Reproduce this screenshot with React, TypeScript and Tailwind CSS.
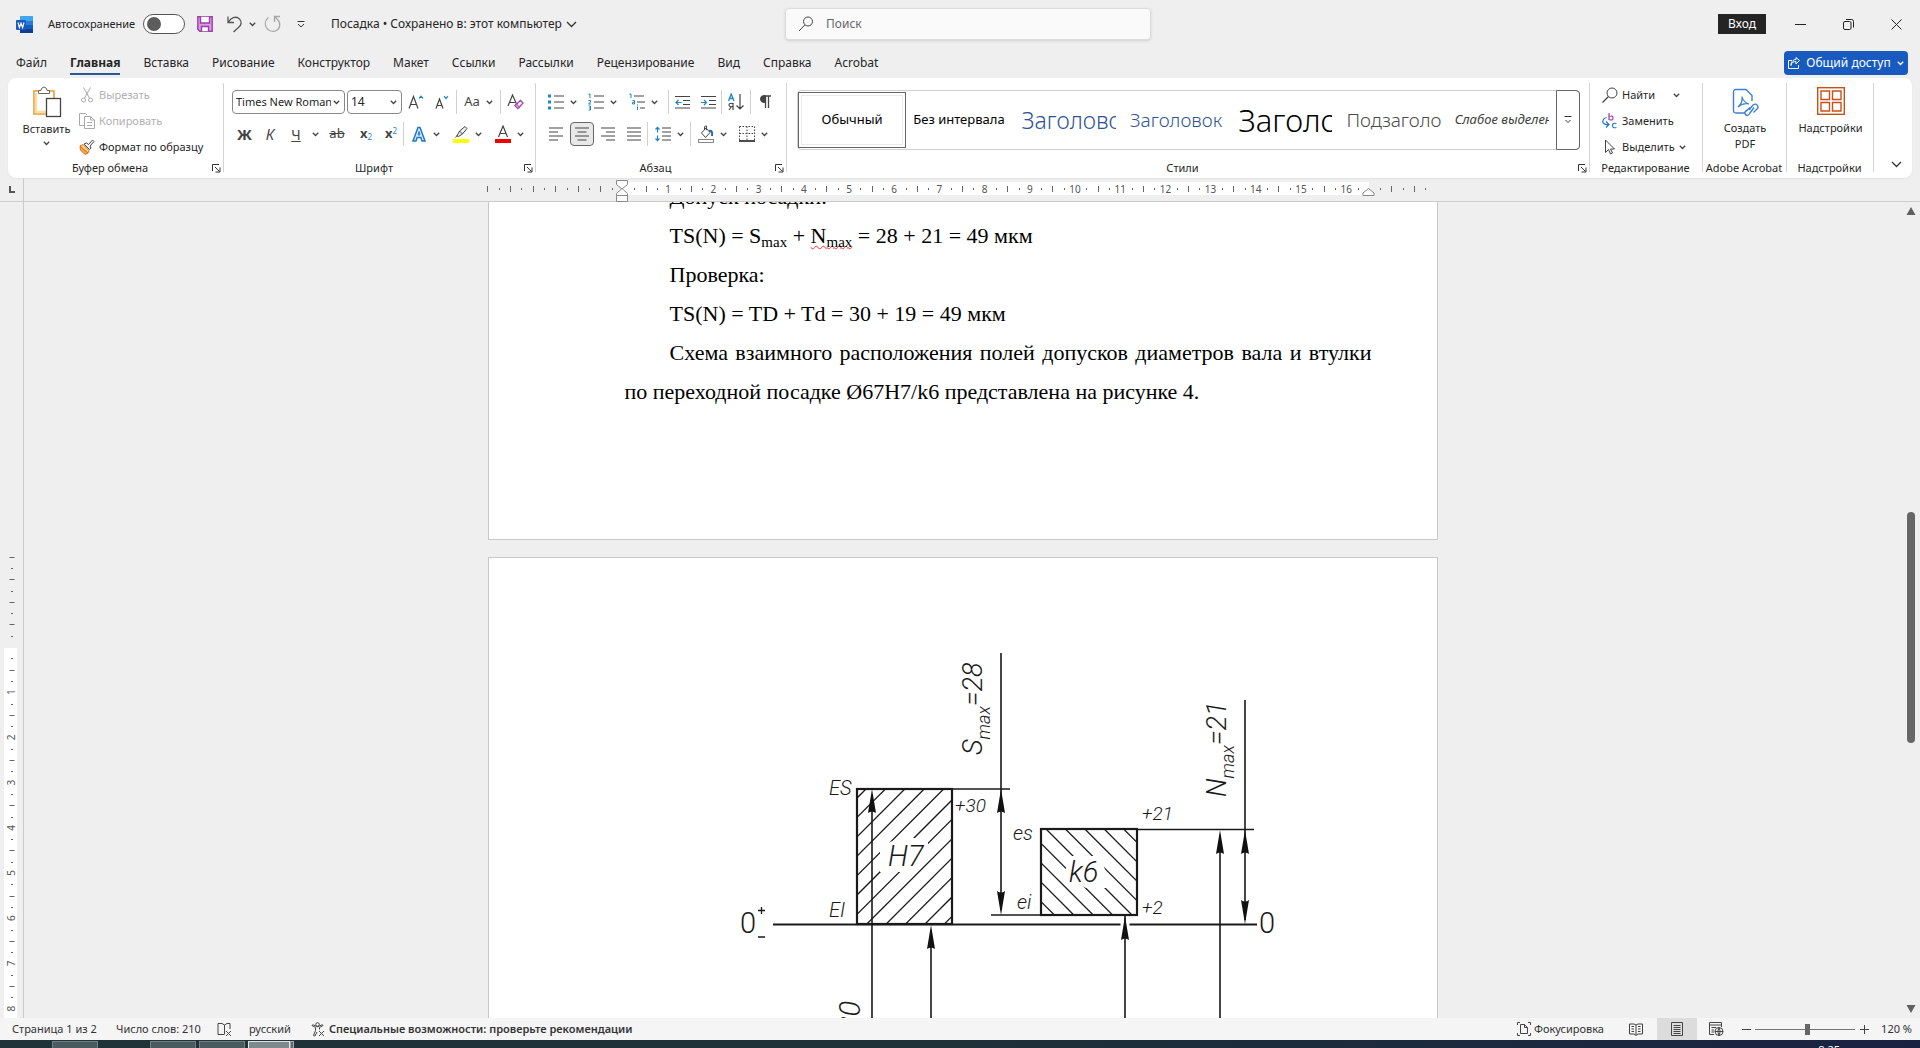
import type { ReactNode } from 'react';
import clsx from 'clsx';

const TABS = [
  'Файл',
  'Главная',
  'Вставка',
  'Рисование',
  'Конструктор',
  'Макет',
  'Ссылки',
  'Рассылки',
  'Рецензирование',
  'Вид',
  'Справка',
  'Acrobat',
];

const STYLES = [
  { name: 'Обычный', className: 'text-[13px] text-black justify-center' },
  { name: 'Без интервала', className: 'text-[13px] text-black' },
  { name: 'Заголовок 1', className: 'text-[23px] font-light text-[#2f5496]' },
  { name: 'Заголовок 2', className: 'text-[19px] font-light text-[#2f5496]' },
  { name: 'Заголовок', className: 'text-[31px] font-light text-black' },
  { name: 'Подзаголовок', className: 'text-[19px] font-light text-[#4a4a4a]' },
  { name: 'Слабое выделение', className: 'text-[13px] italic text-[#404040]' },
];

/* ---------- small building blocks ---------- */

function Svg({ w = 16, h = 16, children }: { w?: number; h?: number; children: ReactNode }) {
  return (
    <svg width={w} height={h} viewBox={`0 0 ${w} ${h}`} fill="none" stroke="#444" className="shrink-0">
      {children}
    </svg>
  );
}

function Chevron({ color = '#444' }: { color?: string }) {
  return (
    <svg width="7" height="5" viewBox="0 0 7 5" fill="none" className="shrink-0">
      <path d="M0.8 0.8L3.5 3.5L6.2 0.8" stroke={color} strokeWidth="1.3" />
    </svg>
  );
}

function BigChevron() {
  return (
    <svg width="11" height="7" viewBox="0 0 11 7" fill="none" stroke="#333" className="shrink-0">
      <path d="M1 1L5.5 5.5L10 1" strokeWidth="1.3" />
    </svg>
  );
}

function Tool({ label, w, children }: { label: string; w: string; children: ReactNode }) {
  return (
    <button aria-label={label} className={clsx('flex h-6 shrink-0 items-center justify-center', w)}>
      {children}
    </button>
  );
}

function SplitTool({ label, w, children }: { label: string; w: string; children: ReactNode }) {
  return (
    <button aria-label={label} className={clsx('flex h-6 shrink-0 items-center justify-center gap-1.5', w)}>
      {children}
      <Chevron />
    </button>
  );
}

function Sep() {
  return <span className="h-6 w-px shrink-0 bg-[#d0d0d0]" />;
}

function Group({
  title,
  launcher,
  className,
  children,
}: {
  title: string;
  launcher?: boolean;
  className: string;
  children: ReactNode;
}) {
  return (
    <section className={clsx('relative flex flex-col', className)}>
      <div className="min-h-0 flex-1">{children}</div>
      <div className="flex h-5 items-center pr-0.5">
        <h2 className="flex-1 whitespace-nowrap text-center text-[11px]">{title}</h2>
        {launcher && (
          <button aria-label={`${title}: параметры`} className="w-2.5">
            <svg width="9" height="9" viewBox="0 0 9 9" fill="none" stroke="#333">
              <path d="M0.5 7V0.5H7M3 3L7.5 7.5M8 3.5V8H3.5" />
            </svg>
          </button>
        )}
      </div>
      <span className="absolute right-0 top-[5px] h-[89px] w-px bg-[#d4d4d4]" />
    </section>
  );
}

/* ---------- title bar and tabs ---------- */

function TitleBar() {
  return (
    <header className="flex h-12 shrink-0 items-center text-[11px]">
      <div className="flex min-w-0 flex-1 items-center pl-4">
        <svg width="17" height="17" viewBox="0 0 17 17" className="shrink-0">
          <rect x="4" y="0" width="13" height="17" rx="1.5" fill="#2b7cd3" />
          <rect x="4" y="0" width="13" height="5" rx="1" fill="#41a5ee" />
          <rect x="4" y="9" width="13" height="8" fill="#185abd" />
          <rect x="4" y="13" width="13" height="4" rx="1" fill="#103f91" />
          <rect x="0" y="4" width="10" height="10" rx="1" fill="#185abd" />
          <path d="M2 6.5L3.4 11.5L5 7.2L6.6 11.5L8 6.5" stroke="#fff" strokeWidth="1.2" fill="none" />
        </svg>
        <label htmlFor="autosave" className="ml-[15px] w-[95px] whitespace-nowrap">
          Автосохранение
        </label>
        <span className="relative h-5 w-[42px] shrink-0 rounded-full border border-[#555] bg-white">
          <input id="autosave" type="checkbox" className="absolute inset-0 m-0 h-full w-full appearance-none" />
          <span className="pointer-events-none absolute left-[3px] top-0.5 h-3.5 w-3.5 rounded-full bg-[#5c5c5c]" />
        </span>
        <button aria-label="Сохранить" className="ml-3">
          <svg width="16" height="16" viewBox="0 0 16 16" fill="none" stroke="#9b3fa8" strokeWidth="1.4">
            <path d="M0.8 0.8H15.2V15.2H2.8L0.8 13.2Z" fill="#d99be2" />
            <path d="M3.5 0.8V7H12.5V0.8" fill="#fff" />
            <path d="M4.5 15.2V10.5H11.5V15.2" fill="#fff" />
          </svg>
        </button>
        <button aria-label="Отменить" className="ml-3.5 flex items-center gap-1.5">
          <svg width="16" height="18" viewBox="0 0 16 18" fill="none" stroke="#555" strokeWidth="1.3">
            <path d="M1 1.5V7.5H7M1.5 7C4 2.5 8.500 1 12 3.500C15.500 6.500 14.500 10 11.500 12.500L6.500 17" />
          </svg>
          <Chevron />
        </button>
        <button aria-label="Повторить" className="ml-2">
          <svg width="17" height="18" viewBox="0 0 17 18" fill="none" stroke="#a8a8a8" strokeWidth="1.3">
            <path d="M4.500 2.500C1.500 4.500 0.500 8.500 2 12C4 16 9 17.500 12.500 15.500C16.500 13 17 7.500 13 4L10.500 1.500M16 1.500H10.500V7" />
          </svg>
        </button>
        <button aria-label="Настройка панели быстрого доступа" className="ml-4">
          <svg width="8" height="7" viewBox="0 0 8 7" fill="none" stroke="#333">
            <path d="M0.500 0.500H7.500M1 3L4 6L7 3" />
          </svg>
        </button>
        <button className="ml-[26px] flex items-center gap-1 whitespace-nowrap text-[12px]">
          Посадка • Сохранено в: этот компьютер
          <BigChevron />
        </button>
      </div>

      <div className="flex h-8 w-[366px] shrink-0 items-center gap-3 rounded-sm border border-[#dcdcdc] bg-[#fafafa] px-3 shadow-sm">
        <Svg w={16} h={16}>
          <circle cx="10" cy="5.500" r="4.500" />
          <path d="M6.800 9L1 15" />
        </Svg>
        <input
          aria-label="Поиск"
          placeholder="Поиск"
          className="w-full bg-transparent text-[12px] outline-none placeholder:text-[#666]"
        />
      </div>

      <div className="flex flex-1 items-center justify-end">
        <button className="mr-2.5 h-5 w-12 bg-[#242424] text-[12px] text-white">Вход</button>
        <Tool label="Свернуть" w="w-12">
          <Svg w={11} h={11}>
            <path d="M0 5.500H11" stroke="#222" />
          </Svg>
        </Tool>
        <Tool label="Восстановить" w="w-12">
          <Svg w={11} h={11}>
            <rect x="0.500" y="2.500" width="7.500" height="8" rx="1.500" stroke="#222" />
            <path d="M3 0.500H8.500Q10.500 0.500 10.500 2.500V8.500" stroke="#222" />
          </Svg>
        </Tool>
        <Tool label="Закрыть" w="w-12">
          <Svg w={11} h={11}>
            <path d="M0.500 0.500L10.500 10.500M10.500 0.500L0.500 10.500" stroke="#222" />
          </Svg>
        </Tool>
      </div>
    </header>
  );
}

function Tabs() {
  return (
    <nav className="flex h-[30px] shrink-0 items-center pl-[5px] pr-3">
      {TABS.map((tab) => (
        <button key={tab} className="h-full pl-[11px] pr-3 text-[12px]">
          <span
            className={clsx(
              'block h-6 whitespace-nowrap leading-6',
              tab === 'Главная' && 'border-b-2 border-[#2b579a] font-bold',
            )}
          >
            {tab}
          </span>
        </button>
      ))}
      <button className="ml-auto flex h-6 w-[124px] items-center justify-center gap-1.5 whitespace-nowrap rounded bg-[#185abd] text-[12px] text-white">
        <svg width="12" height="12" viewBox="0 0 12 12" fill="none" stroke="#fff" className="shrink-0">
          <path d="M4 3.500H0.500V11.500H10.500V8M3 8.500C3.500 5.500 5.500 4.500 8 4.500V7L11.500 3.500L8 0.500V2.500C5 2.500 3 5 3 8.500Z" />
        </svg>
        Общий доступ
        <Chevron color="#fff" />
      </button>
    </nav>
  );
}

/* ---------- ribbon groups ---------- */

function ClipboardGroup() {
  return (
    <Group title="Буфер обмена" launcher className="w-[216px]">
      <div className="flex">
        <button className="flex w-[71px] flex-col items-center pl-1.5 pt-2 text-[11px] leading-4">
          <svg width="30" height="32" viewBox="0 0 30 32" fill="none">
            <path d="M2 5H22V28H2Z" fill="#fff" stroke="#e59b2c" strokeWidth="1.500" />
            <path d="M4 7V26H14" stroke="#fbdca5" strokeWidth="2.500" />
            <path d="M6.500 7.500V4.500H9C9.500 0 14.500 0 15 4.500H17.500V7.500Z" fill="#fff" stroke="#666" />
            <rect x="14.500" y="12.500" width="14" height="18" fill="#fff" stroke="#444" strokeWidth="1.300" />
          </svg>
          <span className="mt-[3px]">Вставить</span>
          <span className="mt-1">
            <Chevron />
          </span>
        </button>
        <div className="flex flex-col pt-1 text-[11px]">
          <button disabled className="flex h-[26px] items-center gap-1 text-[#b1b1b1]">
            <Svg w={16} h={16}>
              <g stroke="#aaa">
                <path d="M4.500 0.500L10.500 11M11.500 0.500L5.500 11" />
                <circle cx="4.500" cy="13" r="2" />
                <circle cx="11.500" cy="13" r="2" />
              </g>
            </Svg>
            Вырезать
          </button>
          <button disabled className="flex h-[26px] items-center gap-1 text-[#b1b1b1]">
            <Svg w={16} h={16}>
              <g stroke="#aaa">
                <path d="M5 12.500H0.500V0.500H6.500L8 2" />
                <path d="M5.500 3.500H11.500L15.500 7V15.500H5.500ZM11.500 3.500V7H15.500M8 9.500H13M8 12.500H13" />
              </g>
            </Svg>
            Копировать
          </button>
          <button className="flex h-[26px] items-center gap-1 whitespace-nowrap">
            <Svg w={16} h={16}>
              <path d="M1 7L9 14L6 15.500L1.500 11Z" fill="#f7a64a" stroke="#d9730d" />
              <path d="M1 7L4 5.500L10 11.500L9 14Z" fill="#fbd09b" stroke="#d9730d" />
              <path d="M5 5L7.500 4L9.500 5.500L13.500 1L15 2.500L11 7L12 9L10.500 10.500Z" fill="#fff" />
            </Svg>
            Формат по образцу
          </button>
        </div>
      </div>
    </Group>
  );
}

function FontGroup() {
  return (
    <Group title="Шрифт" launcher className="w-[312px]">
      <div className="flex h-9 items-end pl-2">
        <div className="mr-0.5 flex h-6 w-[113px] items-center rounded border border-[#888] pl-[3px] pr-1">
          <input
            aria-label="Шрифт"
            defaultValue="Times New Roman"
            className="mr-0.5 w-full min-w-0 bg-transparent text-[11px] outline-none"
          />
          <Chevron />
        </div>
        <div className="flex h-6 w-[55px] items-center rounded border border-[#888] pl-[3px] pr-1">
          <input
            aria-label="Размер шрифта"
            defaultValue="14"
            className="w-full min-w-0 bg-transparent text-[12px] outline-none"
          />
          <Chevron />
        </div>
        <Tool label="Увеличить размер" w="w-7">
          <Svg>
            <path d="M1 14.500L5.500 2.500L10 14.500M2.700 10.500H8.300" strokeWidth="1.200" />
            <path d="M11 4.500L13 2.200L15 4.500" stroke="#1e86c8" strokeWidth="1.200" />
          </Svg>
        </Tool>
        <Tool label="Уменьшить размер" w="w-6">
          <Svg w={14} h={16}>
            <path d="M1 14.500L4.500 5L8 14.500M2.300 11.500H6.700" strokeWidth="1.200" />
            <path d="M9 2.200L11 4.500L13 2.200" stroke="#1e86c8" strokeWidth="1.200" />
          </Svg>
        </Tool>
        <span className="w-0.5" />
        <Sep />
        <button className="flex h-6 w-[43px] items-center justify-center gap-1.5 text-[13px] text-[#444]">
          Aa
          <Chevron />
        </button>
        <Sep />
        <Tool label="Очистить форматирование" w="w-7">
          <Svg w={17} h={18}>
            <path d="M1 13L5.500 2L9.500 11M2.700 9.500H8" strokeWidth="1.200" />
            <path d="M8 12.500L13.500 7.500L16 10L11 15.500Z" fill="#fff" stroke="#a33fb0" strokeWidth="1.300" />
            <path d="M8 12.500L11 15.500L12.500 14L9.500 11Z" fill="#d99be2" stroke="#a33fb0" />
          </Svg>
        </Tool>
      </div>
      <div className="flex h-8 items-end pl-2 text-[#444]">
        <button className="h-6 w-[25px] text-[15px] font-bold">Ж</button>
        <button className="h-6 w-[26px] text-[15px] italic">К</button>
        <button className="h-6 w-[26px] text-[14px] underline">Ч</button>
        <Tool label="Вид подчёркивания" w="w-3">
          <Chevron />
        </Tool>
        <button className="h-6 w-8 text-[13px] line-through">ab</button>
        <button className="h-6 w-[26px] text-[13px] font-bold">
          x<sub className="text-[8px] font-normal text-[#1e86c8]">2</sub>
        </button>
        <button className="h-6 w-6 text-[13px] font-bold">
          x<sup className="text-[8px] font-normal text-[#1e86c8]">2</sup>
        </button>
        <Sep />
        <SplitTool label="Текстовые эффекты" w="w-[42px]">
          <Svg>
            <path d="M2 15L7 1.500H9L14 15H11L9.800 11.500H6.200L5 15Z" fill="#d6ecfb" stroke="#1e78c8" strokeWidth="1.500" />
            <path d="M7 9H9L8 5.500Z" fill="#fff" stroke="#1e78c8" />
          </Svg>
        </SplitTool>
        <SplitTool label="Цвет выделения" w="w-[42px]">
          <Svg w={16} h={18}>
            <path d="M4 11L6.500 6L12 1.500L14 3.500L9.500 9L5.500 11.500ZM6.500 6L9.500 9M2.500 12.500L4.500 10" fill="#eee" />
            <rect x="0" y="14" width="16" height="4" fill="#ffff00" stroke="none" />
          </Svg>
        </SplitTool>
        <SplitTool label="Цвет шрифта" w="w-[42px]">
          <Svg w={16} h={18}>
            <path d="M3.500 12L8 1L12.500 12M5 8.500H11" strokeWidth="1.200" />
            <rect x="0" y="14" width="16" height="4" fill="#ee0000" stroke="none" />
          </Svg>
        </SplitTool>
      </div>
    </Group>
  );
}

function ParagraphGroup() {
  return (
    <Group title="Абзац" launcher className="w-[251px]">
      <div className="flex h-9 items-end pl-1.5">
        <SplitTool label="Маркеры" w="w-10">
          <Svg w={16} h={18}>
            <path d="M6 3H16M6 9H16M6 15H16" strokeWidth="1.200" />
            <path d="M0 1.500H3V4.500H0ZM0 7.500H3V10.500H0ZM0 13.500H3V16.500H0Z" fill="#1e86c8" stroke="none" />
          </Svg>
        </SplitTool>
        <SplitTool label="Нумерация" w="w-10">
          <Svg w={16} h={18}>
            <path d="M6 3H16M6 9H16M6 15H16" strokeWidth="1.200" />
            <path d="M0.500 1.500L2 0.800V5M0.500 7.500H2.500V9L0.500 11H3M0.500 13H2.500V17H0.500M1 15H2.500" stroke="#1e86c8" />
          </Svg>
        </SplitTool>
        <SplitTool label="Многоуровневый список" w="w-[42px]">
          <Svg w={16} h={18}>
            <path d="M5 3H15M8 9H16M11 15H16" strokeWidth="1.200" />
            <path d="M0.500 1.500L2 0.800V5M3.500 7.500H5.500V11H3.500V9.300H5.500M8.500 13.500V17M8.500 11.500V12.500" stroke="#1e86c8" />
          </Svg>
        </SplitTool>
        <span className="w-1" />
        <Sep />
        <Tool label="Уменьшить отступ" w="w-[26px]">
          <Svg w={15} h={14}>
            <path d="M0 1.500H15M8 5.500H15M8 9.500H15M0 13H15" />
            <path d="M6.500 7.500H1M3.500 5L1 7.500L3.500 10" stroke="#1e86c8" strokeWidth="1.200" />
          </Svg>
        </Tool>
        <Tool label="Увеличить отступ" w="w-[26px]">
          <Svg w={15} h={14}>
            <path d="M0 1.500H15M8 5.500H15M8 9.500H15M0 13H15" />
            <path d="M0 7.500H5.500M3 5L5.500 7.500L3 10" stroke="#1e86c8" strokeWidth="1.200" />
          </Svg>
        </Tool>
        <Sep />
        <Tool label="Сортировка" w="w-7">
          <Svg w={16} h={18}>
            <path d="M0.500 8L3.200 1L6 8M1.500 5.500H5" stroke="#1e86c8" strokeWidth="1.300" />
            <path d="M5 10V17M5 10.500H2.500Q1 10.500 1 12T2.500 13.500H5M3.500 13.500L1 17M12 1V16M8.500 12.500L12 16L15.500 12.500" strokeWidth="1.200" />
          </Svg>
        </Tool>
        <Sep />
        <Tool label="Все знаки" w="w-7">
          <Svg w={11} h={14}>
            <path d="M5.500 1H11M5.500 1V13M8.500 1V13" strokeWidth="1.300" />
            <path d="M5.500 0.500H4Q0.500 0.500 0.500 4T4 7.500H5.500Z" fill="#444" />
          </Svg>
        </Tool>
      </div>
      <div className="flex h-8 items-end pl-[7px]">
        <Tool label="По левому краю" w="w-[26px]">
          <Svg w={14} h={14}>
            <path d="M0 1H14M0 5H9M0 9H14M0 13H9" strokeWidth="1.200" />
          </Svg>
        </Tool>
        <span className="flex h-6 w-[26px] justify-center">
          <button aria-label="По центру" className="flex h-6 w-6 items-center justify-center rounded border border-[#666] bg-[#e8e8e8]">
            <Svg w={14} h={14}>
              <path d="M0 1H14M2.500 5H11.500M0 9H14M2.500 13H11.500" strokeWidth="1.200" />
            </Svg>
          </button>
        </span>
        <Tool label="По правому краю" w="w-[26px]">
          <Svg w={14} h={14}>
            <path d="M0 1H14M5 5H14M0 9H14M5 13H14" strokeWidth="1.200" />
          </Svg>
        </Tool>
        <Tool label="По ширине" w="w-[26px]">
          <Svg w={14} h={14}>
            <path d="M0 1H14M0 5H14M0 9H14M0 13H14" strokeWidth="1.200" />
          </Svg>
        </Tool>
        <Sep />
        <SplitTool label="Интервал" w="w-[42px]">
          <Svg w={16} h={16}>
            <path d="M7 2H16M7 6H16M7 10H16M7 14H16" strokeWidth="1.200" />
            <path d="M2.500 1.500V6.500M0.500 3.500L2.500 1.300L4.500 3.500M2.500 9.500V14.500M0.500 12.500L2.500 14.700L4.500 12.500" stroke="#1e86c8" strokeWidth="1.200" />
          </Svg>
        </SplitTool>
        <Sep />
        <SplitTool label="Заливка" w="w-[42px]">
          <Svg w={16} h={18}>
            <path d="M8 3L3.500 8L7.500 12.500L12 7.500ZM6.500 5V2Q7 0.500 8.500 1V5" />
            <path d="M11 6Q15 5 14 11" stroke="#1e68b8" strokeWidth="2" />
            <rect x="0.500" y="14.500" width="15" height="3" stroke="#888" />
          </Svg>
        </SplitTool>
        <SplitTool label="Границы" w="w-10">
          <Svg w={16} h={16}>
            <path d="M0.500 0.500H15.500M0.500 7.500H15.500M0.500 0.500V14M8 0.500V14M15.500 0.500V14" strokeDasharray="1.500 1.500" />
            <path d="M0 15H16" stroke="#111" strokeWidth="1.500" />
          </Svg>
        </SplitTool>
      </div>
    </Group>
  );
}

function StylesGroup() {
  return (
    <Group title="Стили" launcher className="min-w-0 flex-1">
      <div className="flex h-[72px] items-end pl-2.5 pr-2.5">
        <div className="flex h-[60px] min-w-0 flex-1 items-stretch rounded border border-[#d0d0d0]">
          <div className="grid min-w-0 flex-1 grid-cols-7">
            {STYLES.map((style, i) => (
              <button
                key={style.name}
                className={clsx(
                  'flex min-w-0 items-center',
                  i === 0 ? 'my-px border border-[#666] p-0.5' : 'px-[7px]',
                )}
              >
                <span
                  className={clsx(
                    'flex h-full w-full items-center overflow-hidden whitespace-nowrap',
                    i === 0 && 'border border-[#eaeaea]',
                    style.className,
                  )}
                >
                  {style.name}
                </span>
              </button>
            ))}
          </div>
          <button
            aria-label="Другие стили"
            className="-my-px -mr-px flex w-6 shrink-0 items-center justify-center rounded-r border border-[#666]"
          >
            <svg width="8" height="8" viewBox="0 0 8 8" fill="none" stroke="#333">
              <path d="M0.500 0.500H7.500M1.500 4L4 6.500L6.500 4" />
            </svg>
          </button>
        </div>
      </div>
    </Group>
  );
}

function EditingGroup() {
  return (
    <Group title="Редактирование" className="w-[113px]">
      <div className="flex flex-col pl-3 pt-1 text-[11px]">
        <button className="flex h-[26px] items-center gap-1">
          <Svg>
            <circle cx="10" cy="6" r="5" />
            <path d="M6.500 9.500L0.500 15.500" strokeWidth="1.200" />
          </Svg>
          <span className="w-[47px] text-left">Найти</span>
          <Chevron />
        </button>
        <button className="flex h-[26px] items-center gap-1">
          <Svg>
            <path d="M7 0V7M7 3.500Q11 2 11 5T7 6.500" stroke="#a33fb0" strokeWidth="1.200" />
            <path d="M14.500 10.500Q10.500 9.500 10.500 12.500T14.500 14.500M4.500 4.500Q0 6 1 9.500Q2 12 6.500 11.500M4 8.500L7 11.500L4 14.500" stroke="#1e78c8" strokeWidth="1.200" />
          </Svg>
          Заменить
        </button>
        <button className="flex h-[26px] items-center gap-1 whitespace-nowrap">
          <Svg>
            <path d="M3.500 1V13.500L6.500 10.500L8.500 15L10.500 14L8.500 10H12.500Z" />
          </Svg>
          Выделить
          <Chevron />
        </button>
      </div>
    </Group>
  );
}

function Ribbon() {
  return (
    <div className="mx-2 flex h-[100px] shrink-0 rounded-lg bg-white shadow-xs">
      <ClipboardGroup />
      <FontGroup />
      <ParagraphGroup />
      <StylesGroup />
      <EditingGroup />
      <Group title="Adobe Acrobat" className="w-[84px]">
        <button className="flex w-full flex-col items-center pt-2.5 text-[11px] leading-4">
          <svg width="27" height="30" viewBox="0 0 27 30" fill="none" stroke="#3c7fd6" strokeWidth="1.400">
            <path d="M13 25H4Q1.500 25 1.500 22.500V4Q1.500 1.500 4 1.500H14L20 7.500V13" />
            <path d="M6 19C9 16.500 10.500 12 10 8.500Q11 14 17 16Q11 14.500 6 19Z" strokeWidth="1.200" />
            <path d="M17 22L21 17Q24 15 25.500 17.500T24 22L21.500 24.500M22 19.500L18 25Q15.500 29 13.500 26.500T15.500 22L18 19.500" />
          </svg>
          <span className="mt-0.5">Создать</span>
          <span>PDF</span>
        </button>
      </Group>
      <Group title="Надстройки" className="w-[87px]">
        <button className="flex w-full flex-col items-center pt-[9px] text-[11px] leading-4">
          <svg width="28" height="28" viewBox="0 0 28 28" fill="none" stroke="#c8511b" strokeWidth="1.400">
            <rect x="0.700" y="0.700" width="26.600" height="26.600" />
            <path d="M4 4H12.500V12.500H4ZM15.500 4H24V12.500H15.500ZM4 15.500H12.500V24H4ZM15.500 15.500H24V24H15.500Z" />
          </svg>
          <span className="mt-[5px]">Надстройки</span>
        </button>
      </Group>
      <div className="flex w-[38px] items-end justify-end pb-2.5 pr-2.5">
        <button aria-label="Свернуть ленту">
          <BigChevron />
        </button>
      </div>
    </div>
  );
}

/* ---------- rulers ---------- */

const CM = 45.2;

function HorizontalRuler() {
  const ticks: ReactNode[] = [];
  // quarter steps, in centimetres from the left margin
  for (let q = -12; q <= 71; q++) {
    const x = 135 + (q / 4) * CM;
    const inside = q > 0 && q < 66;
    if (q === 0 || q === 66) continue;
    if (inside && q % 4 === 0) {
      ticks.push(
        <text key={q} x={x} y="14.500" textAnchor="middle" fontSize="10" fill="#555">
          {q / 4}
        </text>,
      );
    } else {
      const h = q % 2 === 0 ? 6 : 2;
      ticks.push(<rect key={q} x={Math.round(x)} y={11 - h / 2} width="1" height={h} fill="#666" />);
    }
  }
  return (
    <div className="flex h-6 shrink-0 border-b border-[#cbcbcb]">
      <div className="w-6 shrink-0 border-r border-[#cbcbcb] pl-[9px] pt-2">
        <svg width="6" height="7" viewBox="0 0 6 7" fill="none">
          <path d="M1 0V6H6" stroke="#555" strokeWidth="2" />
        </svg>
      </div>
      <div className="flex flex-1 justify-center">
        <svg width="950" height="23" viewBox="0 0 950 23" className="overflow-visible">
          <rect x="134" y="4" width="747" height="13" fill="#fff" />
          {ticks}
          <g fill="#fff" stroke="#888">
            <path d="M128.500 2.500H139.500V6.500L134 11L128.500 6.500Z" />
            <path d="M134 10.500L139.500 15.500V17.500H128.500V15.500Z" />
            <path d="M128.500 17.500H139.500V23.500H128.500Z" />
            <path d="M880.500 10.500L886 15V17.500H875V15Z" />
          </g>
        </svg>
      </div>
      <div className="w-[19px] shrink-0" />
    </div>
  );
}

function VerticalRuler() {
  const ticks: ReactNode[] = [];
  for (let q = -8; q <= 32; q++) {
    const y = 445 + (q / 4) * CM;
    if (q === 0) continue;
    if (q > 0 && q % 4 === 0) {
      ticks.push(
        <text key={q} transform={`translate(15 ${y}) rotate(-90)`} textAnchor="middle" fontSize="10" fill="#555">
          {q / 4}
        </text>,
      );
    } else {
      const w = q % 2 === 0 ? 5 : 2;
      ticks.push(<rect key={q} x={12 - w / 2} y={Math.round(y)} width={w} height="1" fill="#666" />);
    }
  }
  return (
    <div className="w-6 shrink-0 overflow-hidden border-r border-[#cbcbcb]">
      <svg width="23" height="820" viewBox="0 0 23 820">
        <rect x="4" y="446" width="13" height="374" fill="#fff" />
        {ticks}
      </svg>
    </div>
  );
}

/* ---------- document ---------- */

function Arrow({ x, y, down }: { x: number; y: number; down?: boolean }) {
  const d = down ? -1 : 1;
  return <path d={`M${x} ${y}L${x - 4} ${y + 24 * d}Q${x} ${y + 21 * d} ${x + 4} ${y + 24 * d}Z`} fill="#111" stroke="none" />;
}

// Tolerance zones of the hole (H7) and the shaft (k6) against the zero line
function ToleranceDiagram() {
  const hatch = [-6, -5, -4, -3, -2, -1, 0, 1, 2, 3, 4, 5, 6, 7, 8, 9, 10, 11];
  return (
    <svg
      width="948"
      height="600"
      viewBox="489 558 948 600"
      fill="none"
      stroke="#1a1a1a"
      strokeWidth="1.300"
      className="font-['Roboto',sans-serif]"
    >
      <clipPath id="hole">
        <rect x="857" y="789" width="95" height="135" />
      </clipPath>
      <clipPath id="shaft">
        <rect x="1041" y="829" width="96" height="86" />
      </clipPath>
      <g clipPath="url(#hole)">
        {hatch.map((i) => (
          <path key={i} d={`M${866 + i * 19.4} 789l-140 140`} />
        ))}
        <path d="M880 846L900 838H928V858L914 872H880Z" fill="#fff" stroke="none" />
      </g>
      <g clipPath="url(#shaft)">
        {hatch.map((i) => (
          <path key={i} d={`M${1046 + i * 19.4} 829l140 140`} />
        ))}
        <path d="M1066 856H1100L1106 872V888H1086L1066 878Z" fill="#fff" stroke="none" />
      </g>
      <g strokeWidth="2.200">
        <rect x="857" y="789" width="95" height="135" />
        <rect x="1041" y="829" width="96" height="86" />
        <path d="M773 924.500H1257" />
      </g>
      <path d="M1125 920V930" stroke="#fff" strokeWidth="9" />
      <path d="M952 789H1010M991 915H1041M1137 829.500H1254" strokeWidth="1.600" />
      <path d="M1001 653V910M1245 700V920M872 795V1158M931 930V1158M1125 915V1158M1220 835V1158" strokeWidth="1.600" />
      <Arrow x={1001} y={789} />
      <Arrow x={1001} y={915} down />
      <Arrow x={1245} y={830} />
      <Arrow x={1245} y={924} down />
      <Arrow x={872} y={789} />
      <Arrow x={931} y={925} />
      <Arrow x={1125} y={916} />
      <Arrow x={1220} y={830} />
      <g fill="#1a1a1a" stroke="none" fontStyle="italic" fontWeight="300">
        <text x="829" y="795" fontSize="20">ES</text>
        <text x="829" y="917" fontSize="20">EI</text>
        <text x="955" y="812" fontSize="19">+30</text>
        <text x="888" y="866" fontSize="29">H7</text>
        <text x="1013" y="840" fontSize="20">es</text>
        <text x="1017" y="909" fontSize="20">ei</text>
        <text x="1142" y="820" fontSize="19">+21</text>
        <text x="1142" y="914" fontSize="19">+2</text>
        <text x="1069" y="882" fontSize="29">k6</text>
        <text x="740" y="933" fontSize="29" fontStyle="normal">0</text>
        <text x="1259" y="933" fontSize="29" fontStyle="normal">0</text>
        <text transform="translate(982 755) rotate(-90)" fontSize="27">
          S<tspan fontSize="18" dy="8">max</tspan>
          <tspan dy="-8">=28</tspan>
        </text>
        <text transform="translate(1226 797) rotate(-90)" fontSize="27">
          N<tspan fontSize="18" dy="8">max</tspan>
          <tspan dy="-8">=21</tspan>
        </text>
        <text transform="translate(860 1032) rotate(-90)" fontSize="29">80</text>
      </g>
      <path d="M758 910.500H765M761.500 907V914M758 937H765" />
    </svg>
  );
}

function Document() {
  return (
    <main className="flex min-w-0 flex-1 flex-col items-center gap-[17px] overflow-hidden font-['Liberation_Serif',serif] text-[22px] leading-[39px] text-black">
      <article className="-mt-[26px] w-[950px] shrink-0 border border-[#c8c8c8] bg-white pb-[128px] pl-[136px] pr-[65px]">
        <p className="indent-[45px]">Допуск посадки:</p>
        <p className="indent-[45px]">
          TS(N) = S<sub className="text-[15px]">max</sub> +{' '}
          <span className="underline decoration-red-500 decoration-wavy decoration-1 underline-offset-2 [text-decoration-skip-ink:none]">
            N<sub className="text-[15px]">max</sub>
          </span>{' '}
          = 28 + 21 = 49 мкм
        </p>
        <p className="indent-[45px]">Проверка:</p>
        <p className="indent-[45px]">TS(N) = TD + Td = 30 + 19 = 49 мкм</p>
        <p className="text-justify indent-[45px]">
          Схема взаимного расположения полей допусков диаметров вала и втулки по переходной посадке Ø67H7/k6
          представлена на рисунке 4.
        </p>
      </article>
      <article className="w-[950px] shrink-0 border border-[#c8c8c8] bg-white">
        <ToleranceDiagram />
      </article>
    </main>
  );
}

function ScrollBar() {
  return (
    <div className="flex w-[19px] shrink-0 flex-col items-center justify-between py-1">
      <svg width="10" height="10" viewBox="0 0 10 10">
        <path d="M5 1L9.500 9H0.500Z" fill="#606060" />
      </svg>
      <div className="flex w-2 flex-1 flex-col pt-[296px]">
        <span className="h-[231px] rounded-full bg-[#666]" />
      </div>
      <svg width="10" height="10" viewBox="0 0 10 10">
        <path d="M5 9L9.500 1H0.500Z" fill="#606060" />
      </svg>
    </div>
  );
}

/* ---------- status bar ---------- */

function StatusBar() {
  return (
    <footer className="flex h-[22px] shrink-0 items-center bg-[#f5f5f5] pl-3 pr-2 text-[11px] text-[#333]">
      <button className="w-[104px] whitespace-nowrap text-left">Страница 1 из 2</button>
      <button className="w-[101px] whitespace-nowrap text-left">Число слов: 210</button>
      <button aria-label="Правописание" className="w-8">
        <Svg w={15} h={15}>
          <path d="M7 12.500H1V1.500H5L7.500 3L10 1.500H13V7M7.500 3V12.500M9 9L14 14M14 9L9 14" />
        </Svg>
      </button>
      <button className="w-[62px] text-left">русский</button>
      <button className="flex items-center gap-1 whitespace-nowrap font-semibold">
        <Svg w={14} h={15}>
          <circle cx="6.500" cy="2.500" r="1.800" />
          <path d="M1 3.500L4.500 5.500V8.500L2.500 13.500L4 14L6 10M12 3.500L8.500 5.500V7.500M1 3.500Q1 2.500 2.500 3L6.500 4.800L10.500 3Q12 2.500 12 3.500M8 9L13 14M13 9L8 14" />
        </Svg>
        Специальные возможности: проверьте рекомендации
      </button>
      <button className="ml-auto flex items-center gap-[3px]">
        <Svg w={14} h={14}>
          <path d="M0.500 3V0.500H3M11 0.500H13.500V3M0.500 11V13.500H3M11 13.500H13.500V11M3.500 2.500H7.500L10.500 5.500V11.500H3.500ZM7.500 2.500V5.500H10.500" />
        </Svg>
        Фокусировка
      </button>
      <button aria-label="Режим чтения" className="ml-[25px] mr-3.5">
        <Svg w={14} h={13}>
          <path d="M0.500 1H5L7 2L9 1H13.500V11H9L7 12.500L5 11H0.500ZM7 2V12M2.500 3.500H5M2.500 6H5M2.500 8.500H5M9 3.500H11.500M9 6H11.500M9 8.500H11.500" />
        </Svg>
      </button>
      <button aria-label="Разметка страницы" className="flex h-[22px] w-10 items-center justify-center bg-[#dcdcdc]">
        <Svg w={12} h={14}>
          <path d="M0.500 0.500H11.500V13.500H0.500ZM2.500 3.500H9.500M2.500 5.500H9.500M2.500 7.500H9.500M2.500 9.500H9.500M2.500 11.500H9.500" />
        </Svg>
      </button>
      <button aria-label="Веб-документ" className="ml-3 mr-[18px]">
        <Svg w={15} h={14}>
          <path d="M5 12.500H0.500V0.500H12.500V5M0.500 3H12.500M2.500 5.500H7M2.500 8H5M2.500 10H5" />
          <circle cx="10" cy="9.500" r="4" />
          <path d="M6 9.500H14M10 5.500Q7.500 9.500 10 13.500Q12.500 9.500 10 5.500" />
        </Svg>
      </button>
      <button aria-label="Уменьшить" className="mr-1">
        <Svg w={9} h={9}>
          <path d="M0 4.500H9" />
        </Svg>
      </button>
      <input
        type="range"
        aria-label="Масштаб"
        min="10"
        max="200"
        defaultValue="110"
        className="h-3 w-[100px] appearance-none bg-[linear-gradient(#777,#777)] bg-[length:100%_1px] bg-center bg-no-repeat [&::-webkit-slider-thumb]:h-[11px] [&::-webkit-slider-thumb]:w-[5px] [&::-webkit-slider-thumb]:appearance-none [&::-webkit-slider-thumb]:bg-[#666]"
      />
      <button aria-label="Увеличить" className="ml-[5px]">
        <Svg w={9} h={9}>
          <path d="M0 4.500H9M4.500 0V9" />
        </Svg>
      </button>
      <button className="ml-[11px] w-8 whitespace-nowrap text-right">120 %</button>
    </footer>
  );
}

function TaskBar() {
  return (
    <div className="flex h-2 shrink-0 overflow-hidden bg-gradient-to-r from-[#1f3338] via-[#1e3038] to-[#1a2242] pl-[52px] pr-20">
      <span className="mt-px w-[46px] border border-b-0 border-[#6f7f84] bg-[#4a5a5f]" />
      <span className="ml-[52px] mt-px w-[46px] border border-b-0 border-[#6f7f84] bg-[#4a5a5f]" />
      <span className="ml-[3px] mt-px w-[46px] border border-b-0 border-[#6f7f84] bg-[#4a5a5f]" />
      <span className="ml-[3px] mt-px w-[42px] border border-b-0 border-[#dfe5e6] bg-[#7d898c]" />
      <span className="mt-px w-1 border border-b-0 border-[#9aa6a9] bg-[#5d6b6f]" />
      <time className="ml-auto mt-0.5 text-[11px] leading-[15px] text-white">8:25</time>
    </div>
  );
}

export default function App() {
  return (
    <div className="flex h-screen flex-col overflow-hidden bg-[#efefef] font-['Noto_Sans','Open_Sans',sans-serif] text-[#262626]">
      <TitleBar />
      <Tabs />
      <Ribbon />
      <HorizontalRuler />
      <div className="flex min-h-0 flex-1">
        <VerticalRuler />
        <Document />
        <ScrollBar />
      </div>
      <StatusBar />
      <TaskBar />
    </div>
  );
}
